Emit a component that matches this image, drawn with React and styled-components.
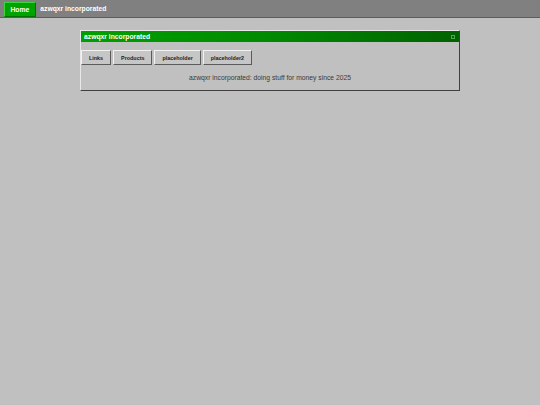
import React from 'react';
import styled, { createGlobalStyle } from 'styled-components';

const links = ['Links', 'Products', 'placeholder', 'placeholder2'];

export default function App() {
  return (
    <>
      <GlobalStyle />
      <TopBar>
        <HomeButton>Home</HomeButton>
        <BarTitle>azwqxr incorporated</BarTitle>
      </TopBar>

      <Window>
        <TitleBar>
          <TitleText>azwqxr incorporated</TitleText>
          <TitleIcon />
        </TitleBar>
        <WindowBody>
          <ButtonRow>
            {links.map((l) => (
              <NavButton key={l}>{l}</NavButton>
            ))}
          </ButtonRow>
          <Tagline>azwqxr incorporated: doing stuff for money since 2025</Tagline>
        </WindowBody>
      </Window>
    </>
  );
}

const GlobalStyle = createGlobalStyle`
  html, body {
    margin: 0;
    padding: 0;
    background: #c0c0c0;
    font-family: "Liberation Sans", Arial, sans-serif;
  }
`;

const TopBar = styled.header`
  display: flex;
  align-items: center;
  gap: 4.5px;
  height: 17px;
  padding-left: 4px;
  background: #808080;
  border-bottom: 1px solid #5c5c5c;
`;

const HomeButton = styled.button`
  height: 15px;
  margin-top: 1px;
  padding: 0 5.5px;
  background: #00a400;
  border: 1px solid;
  border-color: #3fd33f #006e00 #006e00 #3fd33f;
  color: #fff;
  font-family: inherit;
  font-size: 6.75px;
  font-weight: 700;
  cursor: pointer;
`;

const BarTitle = styled.span`
  color: #fff;
  font-size: 6.75px;
  font-weight: 700;
`;

const Window = styled.section`
  width: 378px;
  margin: 12px auto 0;
  border: 1px solid;
  border-color: #e8e8e8 #404040 #404040 #e8e8e8;
`;

const TitleBar = styled.div`
  display: flex;
  align-items: center;
  justify-content: space-between;
  height: 11px;
  padding: 0 4px 0 3px;
  background: linear-gradient(90deg, #00a000 0%, #008a00 50%, #006200 100%);
`;

const TitleText = styled.span`
  color: #fff;
  font-size: 6.75px;
  font-weight: 700;
`;

const TitleIcon = styled.span`
  width: 2px;
  height: 2px;
  border: 1px solid #4fa84f;
`;

const WindowBody = styled.div`
  display: flex;
  flex-direction: column;
  padding: 8px 0 8px 0;
`;

const ButtonRow = styled.div`
  display: flex;
  gap: 2px;
`;

const NavButton = styled.button`
  height: 15px;
  padding: 0 7px;
  background: #c6c6c6;
  border: 1px solid;
  border-color: #f2f2f2 #5a5a5a #5a5a5a #f2f2f2;
  color: #222;
  font-family: inherit;
  font-size: 5.4px;
  font-weight: 700;
  cursor: pointer;
`;

const Tagline = styled.p`
  margin: 9px 0 0;
  text-align: center;
  color: #3a3a3a;
  font-size: 6.75px;
  line-height: 8px;
`;
